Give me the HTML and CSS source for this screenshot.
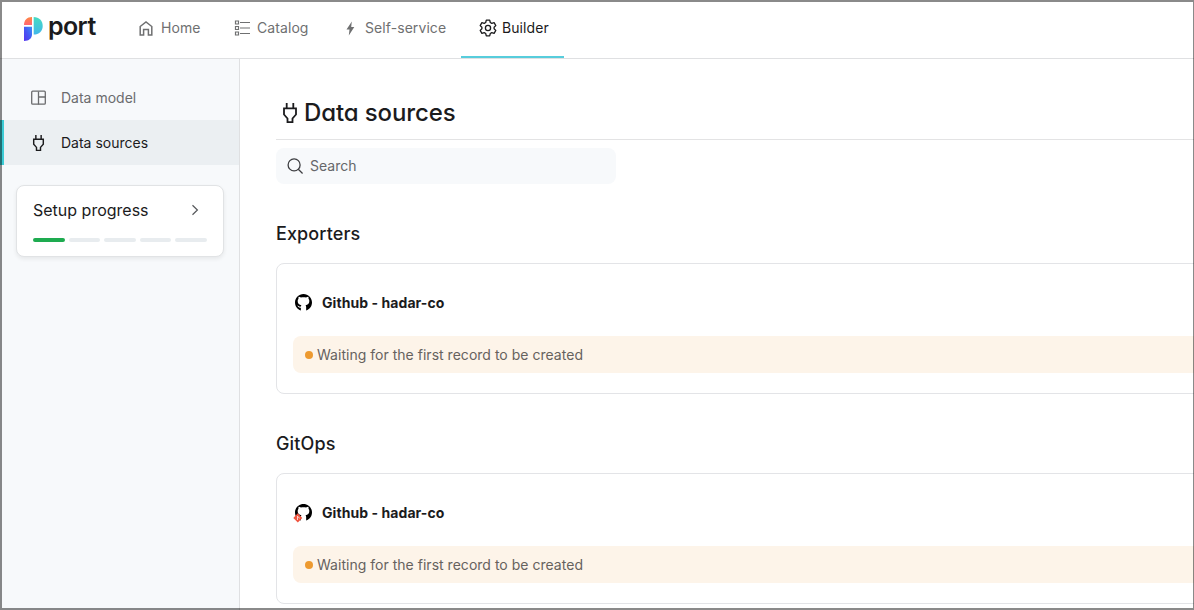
FILE: index.html
```html
<!DOCTYPE html>
<html lang="en">
<head>
<meta charset="utf-8">
<title>Port - Data sources</title>
<link rel="stylesheet" href="styles.css">
</head>
<body>
<svg width="0" height="0" class="defs">
  <symbol id="plug" viewBox="0 0 14 20"><path d="M3.700 0v5M10.300 0v5M1 5.300h12v6.200l-3.500 4v3.700h-5v-3.700L1 11.500z" fill="none" stroke="currentColor" stroke-width="1.800"/></symbol>
  <symbol id="github" viewBox="0 0 16 16"><path fill="currentColor" d="M8 0C3.600 0 0 3.600 0 8c0 3.500 2.300 6.500 5.500 7.600v-2.700C3.500 13.200 3.100 12 2 10.900c1.500 0 1.800 1.400 3.500.9.100-.6.300-.9.600-1.200C4 10.300 2.500 9.300 2.500 6.700c0-.9.300-1.600.8-2.200-.1-.5-.1-1.300.1-2 .8 0 1.600.5 2.200.9 1.600-.4 3.200-.4 4.800 0 .6-.4 1.400-.9 2.200-.9.200.7.200 1.500.1 2 .5.600.8 1.300.8 2.200 0 2.600-1.500 3.600-3.600 3.900.4.400.6 1 .6 1.800v3.200C13.700 14.500 16 11.500 16 8c0-4.400-3.600-8-8-8z"/></symbol>
</svg>
<div class="app">
  <header class="topbar">
    <a class="logo">
      <svg width="20" height="26" viewBox="0 0 20 26">
        <defs>
          <linearGradient id="lg1" x1="0" y1="0" x2="0" y2="1"><stop offset="0" stop-color="#ff8742"/><stop offset="1" stop-color="#ff6674"/></linearGradient>
          <linearGradient id="lg2" x1="0" y1="0" x2="0" y2="1"><stop offset="0" stop-color="#45dcc2"/><stop offset="1" stop-color="#43b8ea"/></linearGradient>
          <linearGradient id="lg3" x1="1" y1="0" x2="0" y2="1"><stop offset="0" stop-color="#3a91f4"/><stop offset=".5" stop-color="#4559f4"/><stop offset="1" stop-color="#5533ee"/></linearGradient>
        </defs>
        <path d="M9 1v8H1C1 4 4 1 9 1z" fill="url(#lg1)"/>
        <path d="M10.700 1c5.300 0 9 3.700 9 9s-3.700 8.600-9 8.600z" fill="url(#lg2)"/>
        <path d="M1 10.800h8v7.500c0 4-3 6.700-8 6.700z" fill="url(#lg3)"/>
      </svg>
      <span>port</span>
    </a>
    <nav class="tabs">
      <a class="tab home"><svg width="14" height="15" viewBox="0 0 14 15"><path d="M1.200 5.500L7 1l5.800 4.500V14H9.400V8.500H4.600V14H1.200z" fill="none" stroke="currentColor" stroke-width="1.500"/></svg><span>Home</span></a>
      <a class="tab catalog"><svg width="16" height="16" viewBox="0 0 16 16" fill="none" stroke="currentColor" stroke-width="1.200"><path d="M6 2.500h10M6 8h10M6 13.500h10"/><path d="M1.500 1h3v3h-3zM1.500 6.500h3v3h-3zM1.500 12h3v3h-3z"/></svg><span>Catalog</span></a>
      <a class="tab service"><svg width="10" height="15" viewBox="0 0 10 15"><path d="M6.800.5L1.500 8.600h3l-.7 5.900L9.300 6H6.200z" fill="currentColor"/></svg><span>Self-service</span></a>
      <a class="tab builder active"><svg width="18" height="18" viewBox="0 0 18 18" fill="none" stroke="currentColor" stroke-width="1.300" stroke-linejoin="round"><path d="M7.300 1.200h3.400l.6 2.300 1.500.9 2.300-.7 1.700 2.900L15.100 8.200v1.600l1.700 1.600-1.700 2.900-2.300-.7-1.500.9-.6 2.300H7.300l-.6-2.300-1.500-.9-2.300.7-1.700-2.900 1.700-1.600V8.200L1.200 6.600l1.700-2.900 2.300.7 1.500-.9z"/><circle cx="9" cy="9" r="2.600"/></svg><span>Builder</span></a>
    </nav>
  </header>
  <div class="body">
    <aside class="sidebar">
      <a class="side-item"><svg width="15" height="15" viewBox="0 0 15 15" fill="none" stroke="currentColor" stroke-width="1.300"><rect x=".7" y="1.200" width="13.600" height="13" rx="1"/><path d="M7.500 1.500v13M7.500 7h7"/></svg><span>Data model</span></a>
      <a class="side-item selected"><svg width="15" height="16"><use href="#plug"/></svg><span>Data sources</span></a>
      <section class="setup">
        <div class="setup-head"><span>Setup progress</span><svg width="8" height="12" viewBox="0 0 8 12"><path d="M1.500 1.300L6.400 6l-4.900 4.700" fill="none" stroke="currentColor" stroke-width="1.200"/></svg></div>
        <div class="steps"><i class="done"></i><i></i><i></i><i></i><i></i></div>
      </section>
    </aside>
    <main class="content">
      <h1 class="title"><svg width="14" height="20"><use href="#plug"/></svg><span>Data sources</span></h1>
      <div class="search"><svg width="16" height="16" viewBox="0 0 16 16" fill="none" stroke="currentColor" stroke-width="1.300"><circle cx="7.100" cy="6.900" r="6"/><path d="M11.300 11.200l4.300 4.300"/></svg><span>Search</span></div>
      <section class="group">
        <h2 class="group-title">Exporters</h2>
        <article class="card">
          <div class="card-name"><svg width="17" height="17"><use href="#github"/></svg><span>Github - hadar-co</span></div>
          <div class="status"><i class="dot"></i><span>Waiting for the first record to be created</span></div>
        </article>
      </section>
      <section class="group">
        <h2 class="group-title">GitOps</h2>
        <article class="card">
          <div class="card-name"><svg width="17" height="17" overflow="visible"><use href="#github" width="17" height="17"/><path d="M2.800 9.300L7.300 14l-4.500 4.500L-1.700 14z" fill="#f05540"/><path d="M2.500 12v4M2.800 12.700l2 1.600" stroke="#fff" stroke-width=".7"/></svg><span>Github - hadar-co</span></div>
          <div class="status"><i class="dot"></i><span>Waiting for the first record to be created</span></div>
        </article>
      </section>
    </main>
  </div>
</div>
</body>
</html>
```
FILE: styles.css
```css
* { box-sizing: border-box; }
body { margin: 0; font: 14px/20px Inter, "Liberation Sans", sans-serif; color: #1b1b1d; background: #fff; }
.defs { position: absolute; }
svg { display: block; flex: none; }
span { white-space: nowrap; }
.app { position: relative; width: 1194px; height: 610px; overflow: hidden; display: flex; flex-direction: column; }
.app::after { content: ""; position: absolute; inset: 0; border: 2px solid rgba(0, 0, 0, .46); border-right-width: 1px; pointer-events: none; }
.topbar { height: 59px; flex: none; display: flex; border-bottom: 1px solid #dfe0e2; }
.logo { display: flex; align-items: flex-start; width: 123px; padding: 16px 0 0 23px; gap: 5px; }
.logo span { font-size: 25px; line-height: 26px; font-weight: 600; margin-top: -3px; letter-spacing: -.6px; }
.tabs { display: flex; }
.tab { display: flex; align-items: center; height: 58px; padding: 0 16px 2px; color: #6f7071; letter-spacing: .08px; }
.tab.home { width: 95px; gap: 8px; padding-left: 16px; }
.tab.catalog { width: 111px; gap: 7px; }
.tab.service { width: 132px; gap: 10px; }
.tab.builder { width: 103px; gap: 5px; padding-left: 18px; }
.tab.active { color: #1b1b1d; border-bottom: 2px solid #57cddc; padding-bottom: 0; }
.body { flex: 1; display: flex; min-height: 0; }
.sidebar { width: 240px; flex: none; background: #f7f9fb; border-right: 1px solid #dfe0e2; padding-top: 16px; }
.side-item { display: flex; align-items: center; height: 45px; gap: 15px; padding-left: 31px; color: #6b6c6e; }
.side-item.selected { padding-left: 27px; color: #1b1b1d; background: #ebeff2; border-left: 4px solid #3ccbd5; }
.setup { margin: 20px 15px 0 16px; height: 72px; padding: 13px 16px; background: #fff; border: 1px solid #e1e3e5; border-radius: 8px; box-shadow: 0 2px 4px rgba(0, 0, 0, .07); }
.setup-head { display: flex; justify-content: space-between; align-items: center; font-size: 16px; line-height: 22px; }
.setup-head svg { margin-right: 8px; color: #55575a; }
.steps { display: flex; gap: 4px; margin-top: 17px; }
.steps i { flex: 1; height: 4px; border-radius: 2px; background: #e8ecef; }
.steps .done { background: #1eab50; }
.content { flex: 1; min-width: 0; padding: 31px 0 0 36px; }
.title { display: flex; align-items: center; height: 50px; gap: 7px; margin: 0; padding: 0 0 3px 7px; border-bottom: 1px solid #e3e3e4; font-size: 24px; font-weight: 500; font-feature-settings: "cv11"; }
.title span { letter-spacing: -.12px; }
.search { display: flex; align-items: center; width: 340px; height: 36px; margin-top: 8px; gap: 7px; padding-left: 11px; border-radius: 8px; background: #f7f9fb; color: #66676a; }
.search svg { color: #3e3f42; }
.group { padding-top: 37px; }
.group-title { margin: 0 0 17px; font-size: 18px; line-height: 25px; font-weight: 500; letter-spacing: .12px; }
.card { width: 960px; height: 131px; padding: 27px 16px 0; border: 1px solid #e3e4e7; border-radius: 8px; }
.card-name { display: flex; align-items: center; height: 24px; gap: 10px; padding-left: 2px; font-weight: 700; letter-spacing: .07px; }
.card-name svg { margin-top: -2px; color: #000; }
.status { display: flex; align-items: center; height: 37px; gap: 4px; margin-top: 21px; padding-left: 12px; border-radius: 8px; background: #fdf4e9; color: #66625e; letter-spacing: .02px; }
.dot { width: 8px; height: 8px; border-radius: 50%; background: #ed9a30; }
```
